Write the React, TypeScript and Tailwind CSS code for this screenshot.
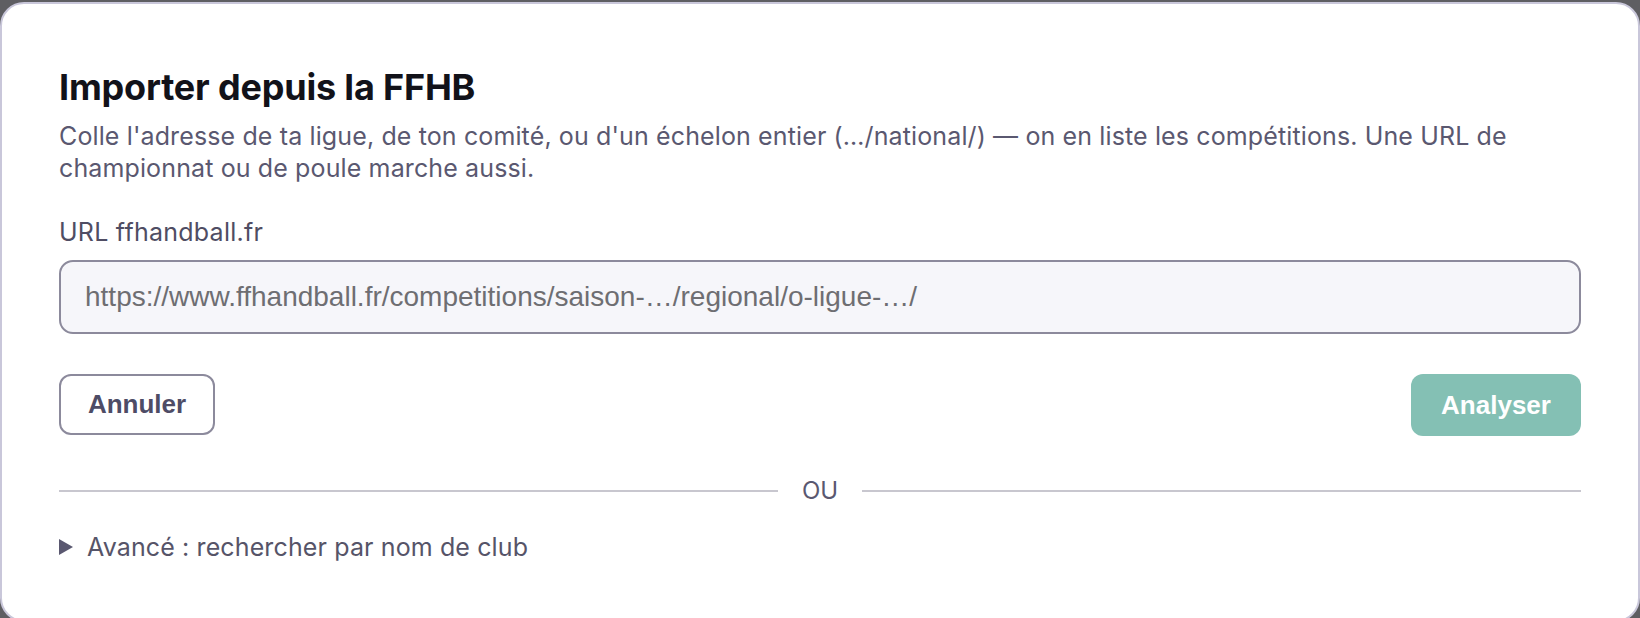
import React from "react";

export default function App() {
  return (
    <div className="w-[1640px] h-[618px] bg-[#5e5e62] pt-[2px] overflow-hidden">
      <div
        className="h-[620px] bg-white rounded-[24px] border-2 border-[#c9c7da] px-[57px] pt-[61px] flex flex-col"
        style={{ fontFamily: "Inter, 'Noto Sans', sans-serif" }}
      >
        <h1 className="text-[36px] leading-[44px] font-bold text-[#121219] tracking-[-0.005em]">
          Importer depuis la FFHB
        </h1>
        <p className="mt-[11px] text-[25px] leading-[32px] text-[#5a5870] tracking-[0.005em]">
          Colle l'adresse de ta ligue, de ton comité, ou d'un échelon entier (…/national/) — on en liste les compétitions. Une URL de championnat ou de poule marche aussi.
        </p>
        <label className="mt-[32px] text-[25px] leading-[32px] text-[#4f4d63] tracking-[0.01em]">
          URL ffhandball.fr
        </label>
        <div className="mt-[12px] h-[74px] rounded-[14px] border-2 border-[#8c8a9c] bg-[#f6f6fa] flex items-center px-[24px]">
          <span
            className="text-[28px] text-[#6e6e72]"
            style={{ fontFamily: "'Liberation Sans', Arial, sans-serif" }}
          >
            https://www.ffhandball.fr/competitions/saison-…/regional/o-ligue-…/
          </span>
        </div>
        <div
          className="mt-[40px] flex justify-between"
          style={{ fontFamily: "'Liberation Sans', Arial, sans-serif" }}
        >
          <button className="h-[61px] w-[156px] rounded-[12px] border-2 border-[#8c8a9c] bg-white text-[26px] font-bold text-[#4e4c66] flex items-center justify-center">
            Annuler
          </button>
          <button className="h-[62px] w-[170px] rounded-[12px] bg-[#84c0b4] text-[26px] font-bold text-white flex items-center justify-center">
            Analyser
          </button>
        </div>
        <div className="mt-[39px] flex items-center gap-[24px]">
          <div className="flex-1 h-[2px] bg-[#c8c7cf]" />
          <span className="text-[24px] leading-[32px] text-[#5a5870]">OU</span>
          <div className="flex-1 h-[2px] bg-[#c8c7cf]" />
        </div>
        <div className="mt-[24px] flex items-center gap-[14px]">
          <svg width="14" height="16" viewBox="0 0 14 16" className="shrink-0">
            <polygon points="0,0 14,8 0,16" fill="#5a5870" />
          </svg>
          <span className="text-[25px] leading-[32px] text-[#565468] tracking-[0.005em]">
            Avancé : rechercher par nom de club
          </span>
        </div>
      </div>
    </div>
  );
}
